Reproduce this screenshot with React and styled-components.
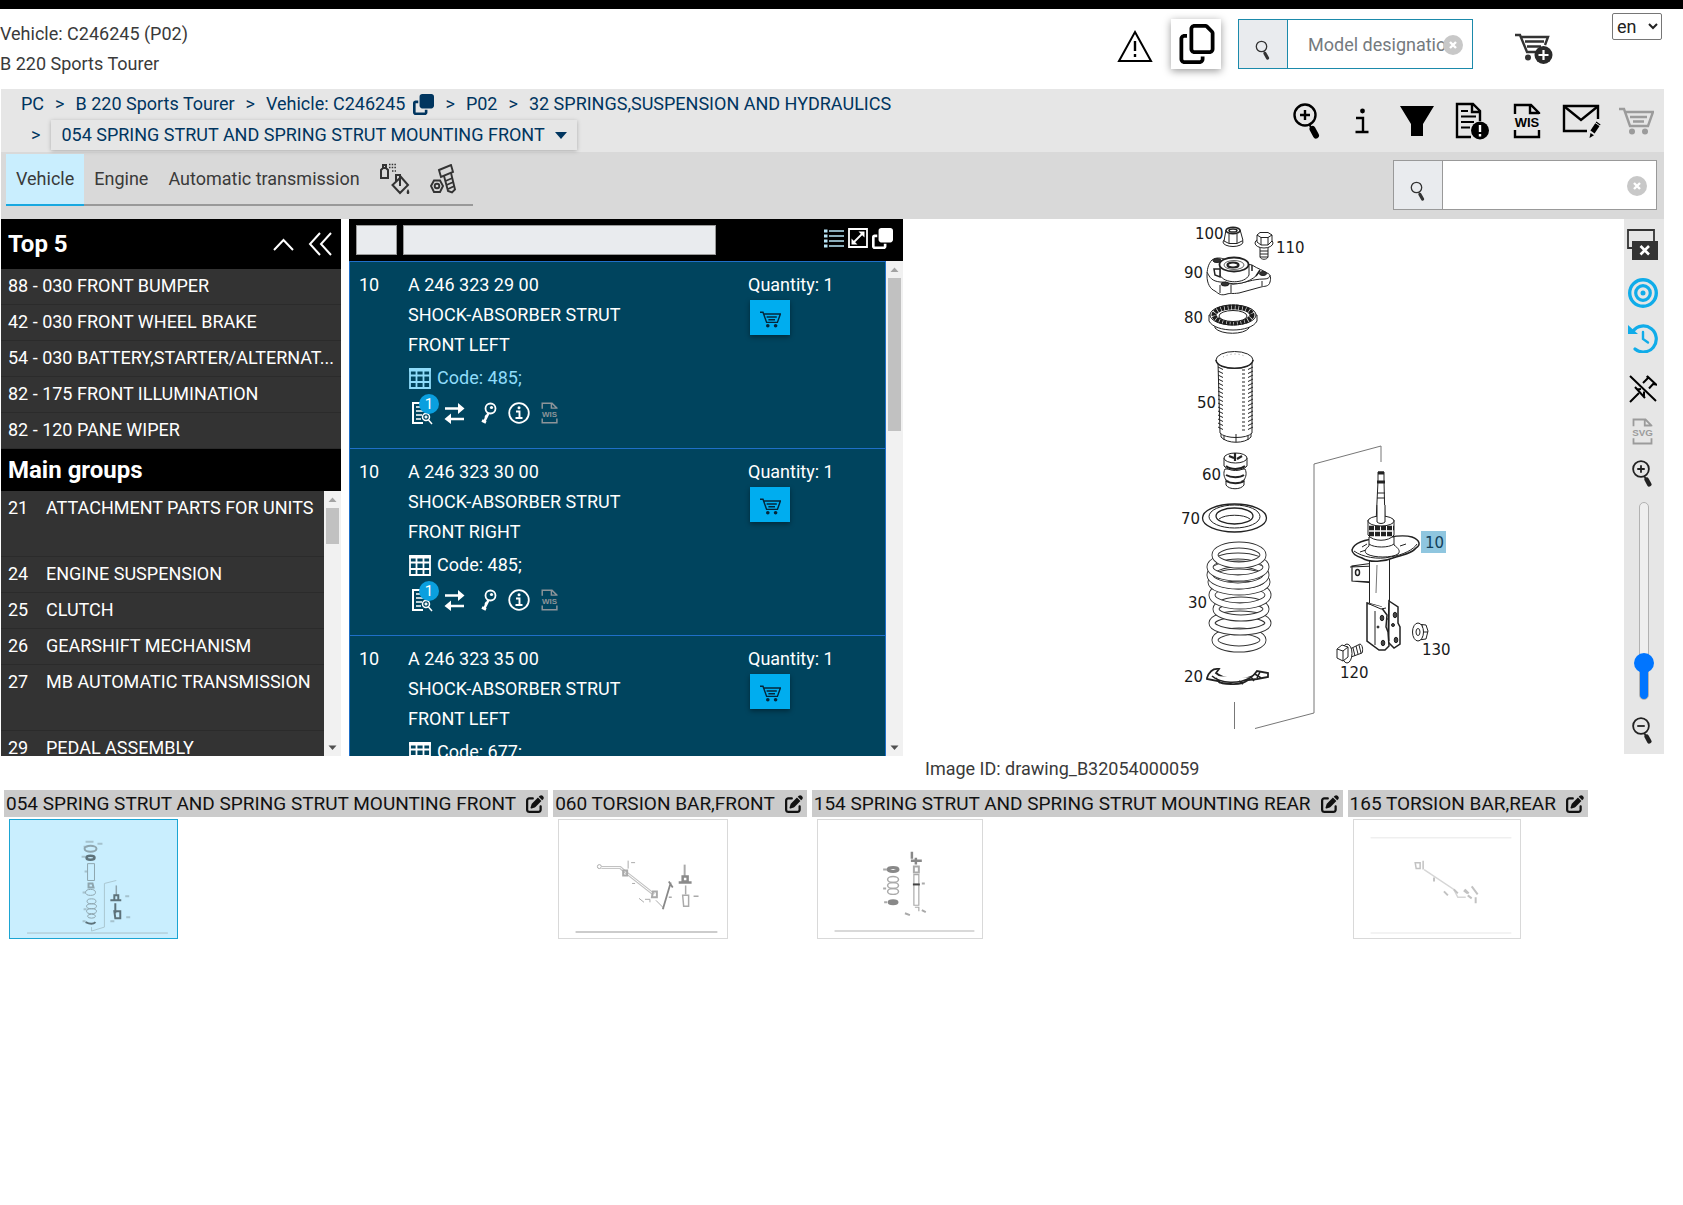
import { useState } from "react";
import styled, { createGlobalStyle } from "styled-components";
import { FaClone, FaRegCopy, FaPenToSquare } from "react-icons/fa6";

const topFive = [
  "88 - 030 FRONT BUMPER",
  "42 - 030 FRONT WHEEL BRAKE",
  "54 - 030 BATTERY,STARTER/ALTERNAT...",
  "82 - 175 FRONT ILLUMINATION",
  "82 - 120 PANE WIPER",
];

const mainGroups = [
  { id: "21", name: "ATTACHMENT PARTS FOR UNITS", tall: true },
  { id: "24", name: "ENGINE SUSPENSION" },
  { id: "25", name: "CLUTCH" },
  { id: "26", name: "GEARSHIFT MECHANISM" },
  { id: "27", name: "MB AUTOMATIC TRANSMISSION", tall: true },
  { id: "29", name: "PEDAL ASSEMBLY" },
];

const parts = [
  { pos: "10", number: "A 246 323 29 00", side: "FRONT LEFT", code: "485", hot: true },
  { pos: "10", number: "A 246 323 30 00", side: "FRONT RIGHT", code: "485" },
  { pos: "10", number: "A 246 323 35 00", side: "FRONT LEFT", code: "677" },
];

const App = () => {
  const [zoom, setZoom] = useState(15);

  return (
    <>
      <GlobalStyle />
      <Header>
        <VehicleInfo>
          <p>Vehicle: C246245 (P02)</p>
          <p>B 220 Sports Tourer</p>
        </VehicleInfo>
        <HeaderTools>
          <PlainButton aria-label="Warnings">
            <WarningIcon />
          </PlainButton>
          <CopyButton aria-label="Copy">
            <FaRegCopy size={40} />
          </CopyButton>
          <SearchBox $color="#1b8aab" $width={235}>
            <button aria-label="Search model">
              <SearchIcon />
            </button>
            <input type="text" aria-label="Model designation" placeholder="Model designation" />
            <Clear aria-label="Clear model">
              <ClearIcon />
            </Clear>
          </SearchBox>
          <CartButton aria-label="Add to cart">
            <CartPlusIcon />
          </CartButton>
          <Language aria-label="Language" defaultValue="en">
            <option value="en">en</option>
            <option value="de">de</option>
          </Language>
        </HeaderTools>
      </Header>

      <Page>
        <CrumbBar>
          <Crumbs aria-label="Breadcrumb">
            <CrumbRow>
              <a href="#pc">PC</a>
              <span>&gt;</span>
              <a href="#b220">B 220 Sports Tourer</a>
              <span>&gt;</span>
              <a href="#vehicle">
                Vehicle: C246245
                <FaClone size={21} />
              </a>
              <span>&gt;</span>
              <a href="#p02">P02</a>
              <span>&gt;</span>
              <a href="#32">32 SPRINGS,SUSPENSION AND HYDRAULICS</a>
            </CrumbRow>
            <CrumbRow $sub>
              <span>&gt;</span>
              <GroupButton>
                054 SPRING STRUT AND SPRING STRUT MOUNTING FRONT
                <svg width="12" height="7" viewBox="0 0 12 7">
                  <path d="M0 0h12L6 7z" fill="currentColor" />
                </svg>
              </GroupButton>
            </CrumbRow>
          </Crumbs>
          <IconStrip>
            <button aria-label="Zoom search">
              <ZoomIcon size={36} sign="+" />
            </button>
            <button aria-label="Information">
              <svg width="16" height="28" viewBox="0 0 16 28">
                <circle cx="8.500" cy="4" r="2.400" />
                <path d="M2 11h7v13.500M1.500 25h13" fill="none" stroke="#000" strokeWidth="2.400" />
              </svg>
            </button>
            <button aria-label="Filter">
              <svg width="36" height="30" viewBox="0 0 36 30">
                <path d="M1 0h34L24 18v12H12V18z" />
              </svg>
            </button>
            <button aria-label="Notes">
              <NotesIcon />
            </button>
            <button aria-label="WIS">
              <FileLabelIcon label="WIS" size={36} />
            </button>
            <button aria-label="Message">
              <MailIcon />
            </button>
            <button aria-label="Cart" disabled>
              <CartIcon width={35} color="#9b9b9b" />
            </button>
          </IconStrip>
        </CrumbBar>

        <TabBar>
          <Tabs>
            <Tab $active>Vehicle</Tab>
            <Tab>Engine</Tab>
            <Tab>Automatic transmission</Tab>
            <Tab aria-label="Paint and fluids">
              <PaintIcon />
            </Tab>
            <Tab aria-label="Standard parts">
              <BoltIcon />
            </Tab>
          </Tabs>
          <SearchBox $color="#999" $width={264}>
            <button aria-label="Search parts">
              <SearchIcon />
            </button>
            <input type="text" aria-label="Part search" />
            <Clear aria-label="Clear search">
              <ClearIcon />
            </Clear>
          </SearchBox>
        </TabBar>

        <Workspace>
          <Sidebar>
            <SideTitle $tall>
              <h2>Top 5</h2>
              <button aria-label="Collapse">
                <svg width="21" height="13" viewBox="0 0 21 13">
                  <path d="M1 12 10.500 2 20 12" fill="none" stroke="#fff" strokeWidth="2" />
                </svg>
              </button>
              <button aria-label="Hide panel">
                <svg width="24" height="24" viewBox="0 0 24 24">
                  <path d="M12 1 2 12l10 11M23 1 13 12l10 11" fill="none" stroke="#fff" strokeWidth="2" />
                </svg>
              </button>
            </SideTitle>
            <SideList>
              {topFive.map((item) => (
                <li key={item}>
                  <a href="#top">{item}</a>
                </li>
              ))}
            </SideList>
            <SideTitle>
              <h2>Main groups</h2>
            </SideTitle>
            <ScrollArea>
              <SideList>
                {mainGroups.map((group) => (
                  <GroupItem key={group.id} $tall={group.tall}>
                    <span>{group.id}</span>
                    <a href="#group">{group.name}</a>
                  </GroupItem>
                ))}
              </SideList>
              <ScrollBar thumb={36} />
            </ScrollArea>
          </Sidebar>

          <PartsPanel>
            <PartsHeader>
              <input type="text" aria-label="Position filter" />
              <input type="text" aria-label="Part filter" />
              <div>
                <button aria-label="List view">
                  <ListIcon />
                </button>
                <button aria-label="Expand">
                  <ExpandIcon />
                </button>
                <button aria-label="Copy list">
                  <FaClone size={21} color="#fff" />
                </button>
              </div>
            </PartsHeader>
            <ScrollArea>
              <PartsList>
                {parts.map((part) => (
                  <Part key={part.number}>
                    <p>{part.pos}</p>
                    <div>
                      <p>{part.number}</p>
                      <p>SHOCK-ABSORBER STRUT</p>
                      <p>{part.side}</p>
                      <Code $hot={part.hot}>
                        <GridIcon />
                        Code: {part.code};
                      </Code>
                      <PartActions>
                        <button aria-label="Notes, 1 entry">
                          <NoteSearchIcon />
                          <Badge>1</Badge>
                        </button>
                        <button aria-label="Replacements">
                          <SwapIcon />
                        </button>
                        <button aria-label="Key">
                          <KeyIcon />
                        </button>
                        <button aria-label="Part information">
                          <InfoIcon />
                        </button>
                        <button aria-label="WIS document" disabled>
                          <FileLabelIcon label="WIS" size={22} color="#8d9499" />
                        </button>
                      </PartActions>
                    </div>
                    <div>
                      <p>Quantity: 1</p>
                      <AddButton aria-label="Add part to cart">
                        <CartIcon width={21} color="#04263a" />
                      </AddButton>
                    </div>
                  </Part>
                ))}
              </PartsList>
              <ScrollBar thumb={153} />
            </ScrollArea>
          </PartsPanel>

          <Canvas>
            <StrutDrawing />
          </Canvas>

          <Toolbar>
            <button aria-label="Close window">
              <WindowIcon />
            </button>
            <button aria-label="Hotspots">
              <TargetIcon />
            </button>
            <button aria-label="Reset view">
              <HistoryIcon />
            </button>
            <PinButton aria-label="Unpin">
              <UnpinIcon />
            </PinButton>
            <button aria-label="Save SVG" disabled>
              <FileLabelIcon label="SVG" size={27} color="#9b9b9b" />
            </button>
            <button aria-label="Zoom in">
              <ZoomIcon size={27} sign="+" color="#222" />
            </button>
            <Slider
              type="range"
              aria-label="Zoom"
              min="0"
              max="100"
              value={zoom}
              onChange={(e) => setZoom(Number(e.target.value))}
              style={{ "--fill": `${zoom + 3}%` }}
            />
            <button aria-label="Zoom out">
              <ZoomIcon size={27} sign="-" color="#222" />
            </button>
          </Toolbar>
        </Workspace>

        <ImageId>Image ID: drawing_B32054000059</ImageId>

        <Thumbs>
          <ThumbCard title="054 SPRING STRUT AND SPRING STRUT MOUNTING FRONT" active>
            <FrontStrutThumb />
          </ThumbCard>
          <ThumbCard title="060 TORSION BAR,FRONT">
            <FrontBarThumb />
          </ThumbCard>
          <ThumbCard title="154 SPRING STRUT AND SPRING STRUT MOUNTING REAR">
            <RearStrutThumb />
          </ThumbCard>
          <ThumbCard title="165 TORSION BAR,REAR">
            <RearBarThumb />
          </ThumbCard>
        </Thumbs>
      </Page>
    </>
  );
};

const ThumbCard = ({ title, active, children }) => (
  <Card>
    <CardTitle>
      {title}
      <button aria-label={`Edit ${title}`}>
        <FaPenToSquare size={18} />
      </button>
    </CardTitle>
    <Thumb $active={active} aria-label={title}>
      {children}
    </Thumb>
  </Card>
);

const ScrollBar = ({ thumb }) => (
  <Track>
    <svg width="17" height="17" viewBox="0 0 17 17">
      <path d="M4.500 11h8l-4-4.500z" fill="#a3a3a3" />
    </svg>
    <ScrollThumb style={{ height: thumb }} />
    <svg width="17" height="17" viewBox="0 0 17 17">
      <path d="M4.500 6.500h8l-4 4.500z" fill="#505050" />
    </svg>
  </Track>
);

/* icons */

const WarningIcon = () => (
  <svg width="36" height="34" viewBox="0 0 36 34">
    <path d="M18 3 34 32H2z" fill="none" stroke="#000" strokeWidth="2" />
    <path d="M18 12v10M18 25v3" stroke="#000" strokeWidth="2.400" />
  </svg>
);

const SearchIcon = () => (
  <svg width="16" height="20" viewBox="0 0 16 20">
    <circle cx="6.500" cy="6.500" r="5.200" fill="none" stroke="#333" strokeWidth="1.300" />
    <path d="M9 11.500 10 13.500" stroke="#333" strokeWidth="1.300" />
    <path d="m10 13.500 2.500 4.500" stroke="#333" strokeWidth="3.200" strokeLinecap="round" />
  </svg>
);

const ClearIcon = () => (
  <svg width="20" height="20" viewBox="0 0 20 20">
    <circle cx="10" cy="10" r="10" fill="#c8c8c8" />
    <path d="m7 7 6 6m0-6-6 6" stroke="#fff" strokeWidth="2.400" />
  </svg>
);

const CartIcon = ({ width, color }) => (
  <svg width={width} height={width * 0.8} viewBox="0 0 35 28">
    <g fill="none" stroke={color} strokeWidth="2.400">
      <path d="M0 2h5l6 17h18l5-14H7" />
      <path d="M11 10h17M14 14.500h11" />
    </g>
    <circle cx="13" cy="24.500" r="3" fill={color} />
    <circle cx="26" cy="24.500" r="3" fill={color} />
  </svg>
);

const CartPlusIcon = () => (
  <svg width="38" height="32" viewBox="0 0 38 32">
    <g fill="none" stroke="#333" strokeWidth="2.400">
      <path d="M0 2h5l7 17h10M6 4h27l-3 8" />
      <path d="M10 8.500h19M12 13.500h14" />
    </g>
    <circle cx="13" cy="24.500" r="3" fill="#333" />
    <circle cx="28.500" cy="22" r="9" fill="#2a2a2a" />
    <path d="M28.500 17v10m-5-5h10" stroke="#fff" strokeWidth="2.200" />
  </svg>
);

const ZoomIcon = ({ size, sign, color = "#000" }) => (
  <svg width={(size * 28) / 36} height={size} viewBox="0 0 28 36">
    <circle cx="12" cy="12" r="10.500" fill="none" stroke={color} strokeWidth="2.400" />
    <path d={sign === "+" ? "M12 7v10M7 12h10" : "M7 12h10"} stroke={color} strokeWidth="2.400" />
    <path d="m16.500 22 2 3" stroke={color} strokeWidth="2" />
    <path d="m19.500 26 3.500 6.500" stroke={color} strokeWidth="6" strokeLinecap="round" />
  </svg>
);

const NotesIcon = () => (
  <svg width="34" height="38" viewBox="0 0 34 38">
    <path d="M16 35H2V2h16l7 7v10M17 2v8h8" fill="none" stroke="#000" strokeWidth="2.400" />
    <path d="M6 9h7M6 14.500h15M6 20h13M6 25.500h9" stroke="#000" strokeWidth="2.200" />
    <circle cx="25" cy="28.500" r="9" />
    <path d="M25 23v7M25 32v2.400" stroke="#fff" strokeWidth="2.400" />
  </svg>
);

const FileLabelIcon = ({ label, size, color = "#000" }) => (
  <svg width={(size * 28) / 36} height={size} viewBox="0 0 28 36">
    <path d="M2 11V2h16l8 8v1M17 2v8h9M2 27v7h24v-7" fill="none" stroke={color} strokeWidth="2.400" />
    <text
      x="14"
      y="24"
      textAnchor="middle"
      fontFamily="Liberation Sans, sans-serif"
      fontSize="13"
      fontWeight="700"
      fill={color}
    >
      {label}
    </text>
  </svg>
);

const MailIcon = () => (
  <svg width="40" height="36" viewBox="0 0 40 36">
    <path d="M25 28H2V3h34v13" fill="none" stroke="#000" strokeWidth="2.400" />
    <path d="m3 4 16 13L35 4" fill="none" stroke="#000" strokeWidth="2.400" />
    <path d="m36.500 20-6 9" stroke="#000" strokeWidth="5" />
    <path d="m27.500 35 1-5 3.500 2.300z" />
    <path d="m33 19.500 5 3.500" stroke="#e6e6e6" strokeWidth="1" />
  </svg>
);

const PaintIcon = () => (
  <svg width="30" height="32" viewBox="0 0 30 32">
    <g fill="none" stroke="#333" strokeWidth="2">
      <path d="M1 15V7l2-2h3l2 2v8zM3 5V2h3v3" />
      <path d="M21 14 12.500 22l7.500 8 8-8zM16 19v-7h4v11" />
    </g>
    <path d="M9 1.500h7M9 4.500h7M12 8h4" stroke="#333" strokeWidth="1.500" strokeDasharray="1.500 1.200" />
    <path d="M28 26c2 3 1.500 5 0 5s-2-2 0-5z" fill="#333" />
  </svg>
);

const BoltIcon = () => (
  <svg width="28" height="30" viewBox="0 0 28 30">
    <g fill="none" stroke="#333" strokeWidth="1.900">
      <path d="m9 6 12-5 2 7-12 5z" />
      <path d="m14 12 4 15 4 1.500 3-3-4-16.500" />
      <path d="m15.500 17 7-3M16.500 21l7-3M18 25l6.500-3" />
      <path d="M4 16.500h6l3 5.500-3 6H4l-3-6z" />
      <circle cx="7" cy="22" r="2.300" />
    </g>
  </svg>
);

const ListIcon = () => (
  <svg width="20" height="19" viewBox="0 0 20 19">
    <path d="M5 2h15M5 7h15M5 12h15M5 17h15" stroke="#b9e6f8" strokeWidth="1.500" />
    <path d="M0 2h3.500M0 7h3.500M0 12h3.500M0 17h3.500" stroke="#b9e6f8" strokeWidth="2.800" />
  </svg>
);

const ExpandIcon = () => (
  <svg width="20" height="20" viewBox="0 0 20 20">
    <path d="M1 1h18v18H1z" fill="none" stroke="#fff" strokeWidth="1.800" />
    <path d="m5 15 10-10" stroke="#fff" strokeWidth="1.800" />
    <path d="M10.500 3.500h6v6zM3.500 10.500v6h6z" fill="#fff" />
  </svg>
);

const GridIcon = () => (
  <svg width="22" height="21" viewBox="0 0 22 21">
    <path
      d="M1 1h20v19H1zM1 7.500h20M1 14h20M7.500 1v19M14.500 1v19"
      fill="none"
      stroke="currentColor"
      strokeWidth="1.800"
    />
    <path d="M0 2h22" stroke="currentColor" strokeWidth="3" />
  </svg>
);

const NoteSearchIcon = () => (
  <svg width="22" height="24" viewBox="0 0 22 24">
    <path d="M12 22H2V2h14v8" fill="none" stroke="#fff" strokeWidth="2" />
    <path d="M5 6h7M5 10h8M5 14h6M5 18h5" stroke="#fff" strokeWidth="1.500" />
    <circle cx="15" cy="16" r="3.500" fill="#00445e" stroke="#fff" strokeWidth="1.500" />
    <path d="M15 14.500v3m-1.500-1.500h3M17.500 19l3.500 4" stroke="#fff" strokeWidth="1.500" />
  </svg>
);

const SwapIcon = () => (
  <svg width="21" height="22" viewBox="0 0 21 22">
    <path d="M1 6.500h14M6 17h14" stroke="#fff" strokeWidth="2.600" />
    <path d="m14 1 6.500 5.500L14 12zM7 11.500.5 17 7 22z" fill="#fff" />
  </svg>
);

const KeyIcon = () => (
  <svg width="16" height="22" viewBox="0 0 16 22">
    <circle cx="9.500" cy="6.500" r="5" fill="none" stroke="#fff" strokeWidth="1.800" />
    <circle cx="10.500" cy="5.500" r="1.600" fill="#fff" />
    <path d="m7.500 11-4.500 9M1 18.500l4 2M4 14l2 1" stroke="#fff" strokeWidth="2.600" />
  </svg>
);

const InfoIcon = () => (
  <svg width="22" height="22" viewBox="0 0 22 22">
    <circle cx="11" cy="11" r="9.800" fill="none" stroke="#fff" strokeWidth="1.800" />
    <circle cx="11" cy="5.800" r="1.500" fill="#fff" />
    <path d="M8 9.500h3.500v6M7.500 16h7" fill="none" stroke="#fff" strokeWidth="1.900" />
  </svg>
);

const WindowIcon = () => (
  <svg width="32" height="34" viewBox="0 0 32 34">
    <path d="M1 1h26v18H1z" fill="none" stroke="#333" strokeWidth="1.800" />
    <path d="M5 12h26v19H5z" fill="#333" />
    <path d="m13.500 17 8.500 8.500m0-8.500-8.500 8.500" stroke="#fff" strokeWidth="2.600" />
  </svg>
);

const TargetIcon = () => (
  <svg width="30" height="30" viewBox="0 0 30 30">
    <g fill="none" stroke="#10ace9">
      <circle cx="15" cy="15" r="13.300" strokeWidth="3.400" />
      <circle cx="15" cy="15" r="7.300" strokeWidth="3.200" />
    </g>
    <circle cx="15" cy="15" r="2.500" fill="#10ace9" />
  </svg>
);

const HistoryIcon = () => (
  <svg width="30" height="30" viewBox="0 0 30 30">
    <path d="M5 8A13 13 0 1 1 7 26" fill="none" stroke="#10ace9" strokeWidth="3.200" strokeLinecap="round" />
    <path d="M0 2v9h10z" fill="#10ace9" />
    <path d="M15 9v7l5 3.500" fill="none" stroke="#10ace9" strokeWidth="2.400" strokeLinecap="round" />
  </svg>
);

const UnpinIcon = () => (
  <svg width="28" height="28" viewBox="0 0 28 28">
    <path d="m1 1 26 25M1 27l9-9" stroke="#000" strokeWidth="2" />
    <path d="M6 12l10 11M8 14.500l4-.5M15 21l0-4.500M14 8l5-5-1-2 9 8.500-3-.5-4 4.500" fill="none" stroke="#000" strokeWidth="2" />
  </svg>
);

/* exploded view of the front strut */

const callouts = [
  ["100", 35, 24],
  ["110", 116, 38],
  ["90", 24, 63],
  ["80", 24, 108],
  ["50", 37, 193],
  ["60", 42, 265],
  ["70", 21, 309],
  ["30", 28, 393],
  ["20", 24, 467],
  ["130", 262, 440],
  ["120", 180, 463],
];

/* bottom coil first, so that each higher one lies over it */
const coils = [
  [79, 425, 24, 9],
  [80, 408, 28, 9],
  [81, 394, 25, 9],
  [80, 380, 28, 11],
  [79, 367, 28, 10],
  [78, 360, 28, 11],
  [78, 352, 28, 11],
  [79, 340, 24, 10],
];

const ribs = Array.from({ length: 16 }, (_, i) => 152 + i * 4);

const StrutDrawing = () => (
  <svg width="100%" height="536" viewBox="-257 4 721 536" role="img" aria-label="Front strut drawing">
    <g fill="none" stroke="#777" strokeWidth="1">
      <path d="M221 247v-16l-67 18v249l-59 15.500M74.500 487v27" />
    </g>
    <g fill="#fff" stroke="#222" strokeWidth="1">
      {/* 100 nut */}
      <ellipse cx="73" cy="27" rx="10" ry="4.500" />
      <path d="M66 15 64 26l5 2.500h8l6-3-3-11z" />
      <path d="M69 19v9M77 19v9" />
      <ellipse cx="73" cy="15.500" rx="7" ry="3.200" strokeWidth="1.500" />
      <ellipse cx="73" cy="15.500" rx="4" ry="1.600" strokeWidth="1.500" />

      {/* 110 bolt */}
      <path d="M100 30v12c1 3 7 3 8 0V30z" />
      <path d="M100 36h8M100 39h8M100 42h8" />
      <ellipse cx="104" cy="28" rx="9" ry="5" />
      <path d="M97 20v7l4 3h7l4-4v-6z" />
      <path d="M101 22v8M108 22v8" />
      <path d="m97 20 3-2.500h8l4 2.500-4 2.500h-7z" />

      {/* 90 mount */}
      <path d="M52 45c4-3 9-2 12-1l28 6c6 4 11 5 15 8 4 1 4 6 3 9-1 5-6 4-9 5l-22 6c-7 1-9 0-12 1-6 2-8 0-12-3-5-2-8-8-8-15 0-6 1-12 5-16z" />
      <path d="M47 57c3 6 5 9 13 10 8 0 10 3 14 2 12-1 18-5 30-5 3 0 6-1 6-4M60 70v8M71 70v8M102 66v5" />
      <path d="M65 67c10 4 24 1 32-7l3-4" />
      <path d="M60 50v10c4 9 25 9 29 0V50" />
      <ellipse cx="74" cy="49.500" rx="14.500" ry="7" strokeWidth="1.800" />
      <ellipse cx="74" cy="50" rx="10" ry="4.500" stroke="#666" />
      <ellipse cx="73" cy="50" rx="5.500" ry="2.500" strokeWidth="2.200" />
      <g fill="#333">
        <ellipse cx="57" cy="45.500" rx="4" ry="2" />
        <ellipse cx="65" cy="69" rx="4" ry="2" />
        <ellipse cx="103" cy="58.500" rx="3.500" ry="2" />
      </g>
      <path d="M54 54h6v8l-5-2zM92 50v6M96 61l4-6" strokeWidth="1.500" />

      {/* 80 bearing */}
      <path d="M55 107v6c6 7 29 7 34 0v-6z" />
      <path d="M49 100v6c6 12 42 12 48 0v-6z" />
      <ellipse cx="73" cy="100" rx="23" ry="10" />
      <ellipse cx="73" cy="100" rx="19" ry="8" fill="none" stroke="#1b1b1b" strokeWidth="5" strokeDasharray="3 .6" />
      <ellipse cx="73" cy="101" rx="14" ry="5.500" />

      {/* 50 sleeve */}
      <path d="M61 216v6c6 7 24 7 30 0v-6z" />
      <path d="M58 148l2 70c5 6 27 6 32 0V148z" />
      <path d="M76 219v8M64 221v4M88 221v4" />
      {ribs.map((y) => (
        <path key={y} d={`M58 ${y}l5 2.500M93 ${y}l-5 2.500M82 ${y + 3}h3`} />
      ))}
      <ellipse cx="74.500" cy="145" rx="18.500" ry="8.500" />
      <path d="M56 145c1 11 36 11 37 0" strokeWidth="1.600" />
      <path d="M63 142c7-4 17-4 23 0" stroke="#999" strokeDasharray="1 3" />

      {/* 60 bump stop */}
      <path d="M66 264v6c3 5 15 5 18 0v-6z" />
      <path d="M65 254c-2 4-1 8 1 11 4 3 14 3 18 0 2-3 3-7 1-11z" />
      <path d="M64 243v8c5 6 18 6 23 0v-8z" />
      <ellipse cx="75.500" cy="243" rx="11.500" ry="5" />
      <path d="M66 251c5 4 14 4 19 0M66 260c5 3 14 3 18 0M66 266c5 3 14 3 18 0" strokeWidth="2" />
      <path d="M75 238v8M69 241l5 2M82 241l-5 3" strokeWidth="2.200" />

      {/* 70 seat */}
      <ellipse cx="74.500" cy="303" rx="32" ry="14" strokeWidth="1.300" />
      <ellipse cx="74.500" cy="301.500" rx="25.500" ry="11.500" />
      <ellipse cx="74.500" cy="301" rx="18.500" ry="8" strokeWidth="1.300" />
      <path d="M59 304c6-5 25-5 31 0" />
    </g>

    {/* 30 spring: dark ring under a narrower white one gives the wire its outline */}
    <g fill="none">
      {coils.map(([cx, cy, rx, ry]) => (
        <g key={cy}>
          <ellipse cx={cx} cy={cy} rx={rx} ry={ry} stroke="#333" strokeWidth="7" />
          <ellipse cx={cx} cy={cy} rx={rx} ry={ry} stroke="#fff" strokeWidth="5.200" />
        </g>
      ))}
    </g>

    <g fill="#fff" stroke="#222" strokeWidth="1">
      {/* 20 clip */}
      <path
        d="M47 463c2-6 6-10 12-9l-3 4c8 7 26 8 37 3l4-5 11 2v4l-11 2-9 1c-6 5-14 4-17 4-8 0-11-1-13-3l-11-2z"
        strokeWidth="1.800"
      />
      <path d="M52 461c9 8 27 8 38 2l5-4 6 4M56 463l4 5M79 466l4 3M91 462l3 4M100 457l-3 6" strokeWidth="1.600" />

      {/* 10 strut */}
      <path d="m218 266-2 42h9l-1-42z" />
      <path d="M218 257h6v10h-6z" />
      <path d="M218 258h6M217 267h8" strokeWidth="3" />
      <path d="M217 278h8M217 283h8" />
      <path d="m214 348-22 3v15l22 2M190 352l25-1M192 366l23 1M192 352v14" strokeWidth="1.200" />
      <ellipse cx="197.500" cy="357.500" rx="2" ry="3" strokeWidth="1.500" />
      <path d="M209.500 344h20v60h-20z" />
      <path d="M217 350l-1 28" stroke="#777" />
      <path d="M192 335c2-8 14-11 30-12 10-1 20-4 30-1 8 3 9 8 4 11-4 5-12 7-20 9-12 5-26 6-34 1-6-2-10-4-10-8z" strokeWidth="1.500" />
      <path d="M194 336c8 6 24 9 36 6 14-2 24-8 27-13M202 332l5-3M200 337l6-2M240 331l6-2" />
      <path d="M209 322v9c-4 3-5 6-2 8 7 4 25 4 31 0 3-3 0-6-4-9v-8z" />
      <path d="M209 329c5 4 20 4 25 0" />
      <path d="M208 305v15c5 7 21 7 26 0v-15z" />
      <path d="M209 313h25M209 319h24" strokeWidth="4.500" strokeDasharray="5 1" />
      <ellipse cx="221" cy="306" rx="13" ry="5" />
      <path d="M217 290v17c2 2 6 2 8 0v-17" />
      <path d="m229 386 9 6v16l2 4v17l-6 4-6-6z" strokeWidth="1.500" />
      <path d="M207 388v38l12 9h6l4-4-1-14-2-5 1-12-6-8z" strokeWidth="1.500" />
      <path d="M215 396v34M207 388l14 6 5-1M229 388v38" />
      <g fill="#444">
        <ellipse cx="222" cy="403" rx="1.800" ry="2.800" />
        <ellipse cx="223" cy="428" rx="1.800" ry="2.800" />
        <ellipse cx="235" cy="400" rx="1.800" ry="2.800" />
        <ellipse cx="236" cy="425" rx="1.800" ry="2.800" />
        <circle cx="218" cy="412" r="1" />
        <circle cx="233" cy="410" r="1.500" />
      </g>

      {/* 120 bolt */}
      <path d="m190 434 10-5c3 1 3 7 2 9l-11 4z" />
      <path d="m193 433 2 8M196 431l2 8M199 430l2 8" />
      <ellipse cx="187" cy="438.500" rx="5" ry="9.500" />
      <path d="m177 434 5-4 6 2v10l-5 4-6-3z" />
      <path d="m177 434 6 2 5-4M183 436v10" />

      {/* 130 nut */}
      <path d="m257 409 9 1 2 6-2 8-8 1z" />
      <path d="M262 410l1 7-2 8M263 417h5" />
      <ellipse cx="258" cy="417" rx="5.500" ry="9" />
      <ellipse cx="258" cy="417" rx="2" ry="3.500" />
    </g>

    <rect x="261" y="316" width="25" height="22" fill="#8fc6df" />
    <g fontFamily="DejaVu Sans, sans-serif" fontSize="15" fill="#1a1a1a">
      {callouts.map(([label, x, y]) => (
        <text key={label} x={x} y={y}>
          {label}
        </text>
      ))}
      <text x="265" y="333" fill="#12405a">
        10
      </text>
    </g>
  </svg>
);

/* thumbnails */

const FrontStrutThumb = () => (
  <svg width="167" height="118" viewBox="0 0 168 119">
    <g fill="none" stroke="#8ea5ae" strokeWidth="1">
      <path d="M76 22h8M74 27h4M88 24h5M72 37h4M75 52h3M73 73h3M74 90h3M73 102h3M101 102h4M117 98h4M116 77h4" strokeWidth="2" opacity=".6" />
      <ellipse cx="81" cy="29" rx="6" ry="3" strokeWidth="2" />
      <ellipse cx="81" cy="38" rx="4" ry="2" strokeWidth="2.500" stroke="#5d727a" />
      <path d="M78 44h7v17h-7z" />
      <path d="M79 64h4l1 4h-5z" strokeWidth="2" />
      <ellipse cx="81" cy="73" rx="5" ry="3" />
      <ellipse cx="82" cy="82" rx="4.500" ry="2.500" />
      <ellipse cx="82" cy="87" rx="5" ry="2.500" />
      <ellipse cx="82" cy="92" rx="5" ry="2.500" />
      <ellipse cx="82" cy="97" rx="4" ry="2" />
      <path d="M76 103c4 2 8 2 10 0" strokeWidth="2" stroke="#5d727a" />
      <path d="M82 108v4l13-4V64l12-3" stroke="#aac6d0" />
      <path d="M107 66v10" strokeWidth="1.500" />
      <path d="M105 76h4v5h-4zM101 81h11M106 84v10M105 92h6v7h-5z" strokeWidth="2" stroke="#5d727a" />
    </g>
    <path d="M17 114h142" stroke="#a9bfc7" />
  </svg>
);

const FrontBarThumb = () => (
  <svg width="168" height="118" viewBox="0 0 168 119">
    <g fill="none" stroke="#aaa">
      <circle cx="40" cy="47" r="2" />
      <path d="M42 48h19l6 5 28 22" stroke="#c2c2c2" strokeWidth="3" />
      <path d="M42 48h19l6 5 28 22" stroke="#fff" />
      <path d="M64 51h4v5h-4zM94 72h4v6h-5z" strokeWidth="2" />
      <path d="M69 41v8M72 43h4M73 64h3M80 79l5 4M86 80h5v3M97 81l8 8" />
      <path d="m104 90 8-27M110 62l4 6" strokeWidth="1.800" stroke="#888" />
      <path d="M126 45v12" strokeWidth="2" />
      <path d="M124 57h5v5h-5zM120 63h13" strokeWidth="2.500" stroke="#8a8a8a" />
      <path d="M127 66v9M124 76h6v11h-5zM135 77h5M110 78h3" strokeWidth="1.500" />
    </g>
    <path d="M16 113h143" stroke="#bbb" strokeWidth="1.500" />
  </svg>
);

const RearStrutThumb = () => (
  <svg width="164" height="118" viewBox="0 0 164 119">
    <g fill="none" stroke="#aaa">
      <ellipse cx="75" cy="50" rx="5" ry="2" strokeWidth="3" stroke="#888" />
      <ellipse cx="75" cy="60" rx="5.500" ry="3" strokeWidth="1.500" />
      <ellipse cx="75" cy="66" rx="5.500" ry="3" strokeWidth="1.500" />
      <ellipse cx="75" cy="72" rx="5.500" ry="3" strokeWidth="1.500" />
      <ellipse cx="75" cy="83" rx="4" ry="1.500" strokeWidth="3" stroke="#888" />
      <path d="M65 50h4M65 69h3M66 83h3M104 64h3M87 94l5 2M104 91l4 2" strokeWidth="2" />
      <path d="M94 32v7M93 41h11M98 38v7" strokeWidth="2.500" stroke="#888" />
      <path d="M96 47h5v6h-5z" strokeWidth="2" />
      <path d="M96 55h5v31h-5zM96 65h5M97 88h4v4" strokeWidth="1.200" />
      <path d="M95 65h7" stroke="#444" strokeWidth="2" />
    </g>
    <path d="M16 112h141" stroke="#ccc" strokeWidth="1.500" />
  </svg>
);

const RearBarThumb = () => (
  <svg width="166" height="118" viewBox="0 0 166 119">
    <g fill="none" stroke="#c2c2c2">
      <path d="M61 43h5v6h-4zM69 41v9" strokeWidth="1.500" />
      <path d="m70 50 30 20 4 8h8" stroke="#d6d6d6" strokeWidth="1.500" />
      <path d="M80 58v4M90 72l4 4M100 70l4 4M110 71l4 3M114 76l4 3M118 67l6 8M122 78v6M111 70l4 4" strokeWidth="2" />
    </g>
    <path d="M16 18h142M16 114h142" stroke="#efefef" strokeWidth="1.500" />
  </svg>
);

/* styles */

const GlobalStyle = createGlobalStyle`
  * {
    box-sizing: border-box;
  }
  body {
    margin: 0;
    background: #fff;
    color: #3a3a3a;
    font: 18px/30px Roboto, "Liberation Sans", sans-serif;
  }
  p, h2, ul {
    margin: 0;
    padding: 0;
  }
  ul {
    list-style: none;
  }
  a {
    color: inherit;
    text-decoration: none;
  }
  button {
    display: flex;
    align-items: center;
    justify-content: center;
    padding: 0;
    border: 0;
    background: none;
    color: inherit;
    font: inherit;
    cursor: pointer;
  }
  input {
    font: inherit;
  }
  svg {
    display: block;
    flex: none;
  }
`;

const Header = styled.header`
  display: flex;
  justify-content: space-between;
  height: 89px;
  border-top: 9px solid #000;
  padding-right: 21px;
`;

const VehicleInfo = styled.div`
  padding-top: 10px;
`;

const HeaderTools = styled.div`
  display: flex;
  align-items: flex-start;
  padding-top: 4px;

  & > :not(select) {
    margin-top: 6px;
  }
`;

const PlainButton = styled.button`
  width: 36px;
  height: 50px;
  padding-top: 4px;
`;

const CopyButton = styled.button`
  width: 50px;
  height: 50px;
  margin: 0 17px 0 18px;
  padding-left: 2px;
  background: #fff;
  color: #000;
  box-shadow: 0 2px 8px rgba(0, 0, 0, 0.4);
`;

const CartButton = styled.button`
  height: 60px;
  margin: 0 59px 0 42px;
`;

const SearchBox = styled.div`
  display: flex;
  align-items: center;
  width: ${(props) => props.$width}px;
  height: 50px;
  border: 1px solid ${(props) => props.$color};
  background: #fff;

  & > button:first-child {
    width: 49px;
    height: 100%;
    padding-top: 12px;
    border-right: 1px solid ${(props) => props.$color};
    background: #e9ebee;
  }
  & > input {
    flex: 1;
    min-width: 0;
    padding: 2px 0 0 20px;
    border: 0;
    outline: 0;
  }
  & > input::placeholder {
    color: #757a7e;
  }
`;

/* sits on top of the end of the typed text */
const Clear = styled.button`
  margin: 1px 9px 0 -20px;
  z-index: 1;
`;

const Language = styled.select`
  width: 50px;
  height: 27px;
  border: 1px solid #767676;
  border-radius: 2px;
  background: #fff;
  color: #222;
  font: 18px Roboto, sans-serif;
`;

const Page = styled.main`
  padding: 0 19px 0 1px;
`;

const CrumbBar = styled.div`
  display: flex;
  justify-content: space-between;
  min-height: 63px;
  background: #e6e6e6;
  color: #00355f;
`;

const Crumbs = styled.nav`
  display: flex;
  flex-direction: column;
  gap: 1px;
`;

const CrumbRow = styled.div`
  display: flex;
  align-items: center;
  gap: 11px;
  height: 30px;
  padding-left: ${(props) => (props.$sub ? 30 : 20)}px;

  a {
    display: flex;
    align-items: center;
    gap: 8px;
  }
`;

const GroupButton = styled.button`
  gap: 10px;
  height: 30px;
  padding: 0 10px;
  box-shadow: 0 1px 4px rgba(0, 0, 0, 0.25);
`;

const IconStrip = styled.div`
  display: flex;

  button {
    width: 55px;
    color: #000;
  }
`;

const TabBar = styled.div`
  display: flex;
  align-items: flex-start;
  justify-content: space-between;
  height: 67px;
  padding: 2px 7px 0 5px;
  background: #d9d9d9;

  & > :last-child {
    margin-top: 6px;
  }
`;

const Tabs = styled.div`
  display: flex;
  height: 52px;
  padding-right: 5px;
  border-bottom: 2px solid #999;
`;

const Tab = styled.button`
  height: 52px;
  padding: 0 10px;
  border-bottom: 2px solid ${(props) => (props.$active ? "#18a8e0" : "#999")};
  background: ${(props) => (props.$active ? "#c9eefe" : "none")};
`;

const Workspace = styled.div`
  display: grid;
  grid-template-columns: 340px 562px minmax(0, 1fr) 40px;
  height: 537px;
`;

const Sidebar = styled.aside`
  display: flex;
  flex-direction: column;
  min-height: 0;
  background: #333;
  color: #fff;
`;

const SideTitle = styled.div`
  display: flex;
  align-items: center;
  gap: 14px;
  height: ${(props) => (props.$tall ? 50 : 42)}px;
  padding: 0 9px 0 7px;
  background: #000;

  h2 {
    flex: 1;
    font-size: 24px;
    line-height: 30px;
  }
`;

const SideList = styled.ul`
  min-width: 0;

  li {
    height: 36px;
    padding: 2px 7px;
    border-bottom: 1px solid #2b2b2b;
    overflow: hidden;
    text-overflow: ellipsis;
    white-space: nowrap;
  }
`;

const GroupItem = styled.li`
  display: flex;

  && {
    height: ${(props) => (props.$tall ? 66 : 36)}px;
  }
  span {
    width: 38px;
  }
`;

const ScrollArea = styled.div`
  display: flex;
  flex: 1 1 0;
  min-height: 0;
  overflow: hidden;

  & > :first-child {
    flex: 1;
  }
`;

const Track = styled.div`
  display: flex;
  flex-direction: column;
  align-items: center;
  width: 17px;
  background: #f1f1f1;

  svg:last-child {
    margin-top: auto;
  }
`;

const ScrollThumb = styled.div`
  width: 13px;
  background: #c1c1c1;
`;

const PartsPanel = styled.section`
  display: flex;
  flex-direction: column;
  min-height: 0;
  margin-left: 8px;
  color: #fff;
`;

const PartsHeader = styled.div`
  display: flex;
  gap: 6px;
  height: 42px;
  padding: 6px 10px 6px 7px;
  background: #000;

  input {
    width: 41px;
    min-width: 0;
    border: 1px solid #999;
    background: #e9ebee;
  }
  input + input {
    width: 313px;
  }
  div {
    display: flex;
    gap: 4px;
    height: 26px;
    margin-left: auto;
  }
`;

const PartsList = styled.div`
  border: solid #1f6fc8;
  border-width: 1px 1px 0;
  background: #00445e;
`;

const Part = styled.article`
  display: grid;
  grid-template-columns: 49px 340px 1fr;
  height: 187px;
  padding: 8px 0 0 9px;
  border-bottom: 1px solid #1f6fc8;
`;

const Code = styled.p`
  display: flex;
  align-items: center;
  gap: 6px;
  height: 36px;
  padding-left: 1px;
  color: ${(props) => (props.$hot ? "#8fdcfa" : "#fff")};
`;

const PartActions = styled.div`
  display: flex;
  gap: 11px;
  height: 34px;
  padding-left: 3px;

  button {
    position: relative;
  }
  button:nth-child(3) {
    padding-left: 5px;
  }
`;

const Badge = styled.span`
  position: absolute;
  top: -2px;
  left: 8px;
  width: 20px;
  height: 20px;
  border-radius: 50%;
  background: #0a9fdf;
  font-size: 15px;
  line-height: 20px;
`;

const AddButton = styled.button`
  width: 40px;
  height: 35px;
  margin-left: 2px;
  padding-top: 4px;
  background: #00adef;
  box-shadow: 0 2px 5px rgba(0, 0, 0, 0.4);
`;

const Canvas = styled.section`
  min-width: 0;
`;

const Toolbar = styled.div`
  display: flex;
  flex-direction: column;
  align-items: center;
  gap: 15px;
  height: 535px;
  padding: 10px 3px 0 0;
  background: #e6e6e6;
`;

const PinButton = styled.button`
  padding-top: 7px;
`;

const Slider = styled.input`
  width: 20px;
  height: 198px;
  margin: 0 0 2px 2px;
  appearance: none;
  background: none;
  writing-mode: vertical-lr;
  direction: rtl;

  &::-webkit-slider-runnable-track {
    width: 10px;
    height: 198px;
    margin: 0 5px;
    border: 1px solid #b2b2b2;
    border-radius: 5px;
    background: linear-gradient(to top, #0075ff var(--fill), #efefef var(--fill));
  }
  &::-webkit-slider-thumb {
    width: 20px;
    height: 20px;
    margin-left: -6px;
    appearance: none;
    border-radius: 50%;
    background: #0075ff;
  }
`;

const ImageId = styled.p`
  padding: 0 0 7px 924px;
  line-height: 26px;
`;

const Thumbs = styled.div`
  display: flex;
  gap: 5px;
  padding: 1px 0 0 3px;
`;

const Card = styled.section`
  min-width: 0;
`;

const CardTitle = styled.div`
  display: flex;
  align-items: center;
  gap: 10px;
  height: 27px;
  padding: 0 4px 0 2px;
  background: #cbcbcb;
  color: #111;
  font-size: 19px;
  white-space: nowrap;
`;

const Thumb = styled.button`
  margin: 2px 0 0 5px;
  border: 1px solid ${(props) => (props.$active ? "#1ba5d3" : "#d9d9d9")};
  background: ${(props) => (props.$active ? "#c9eefe" : "#fff")};
`;

export default App;
